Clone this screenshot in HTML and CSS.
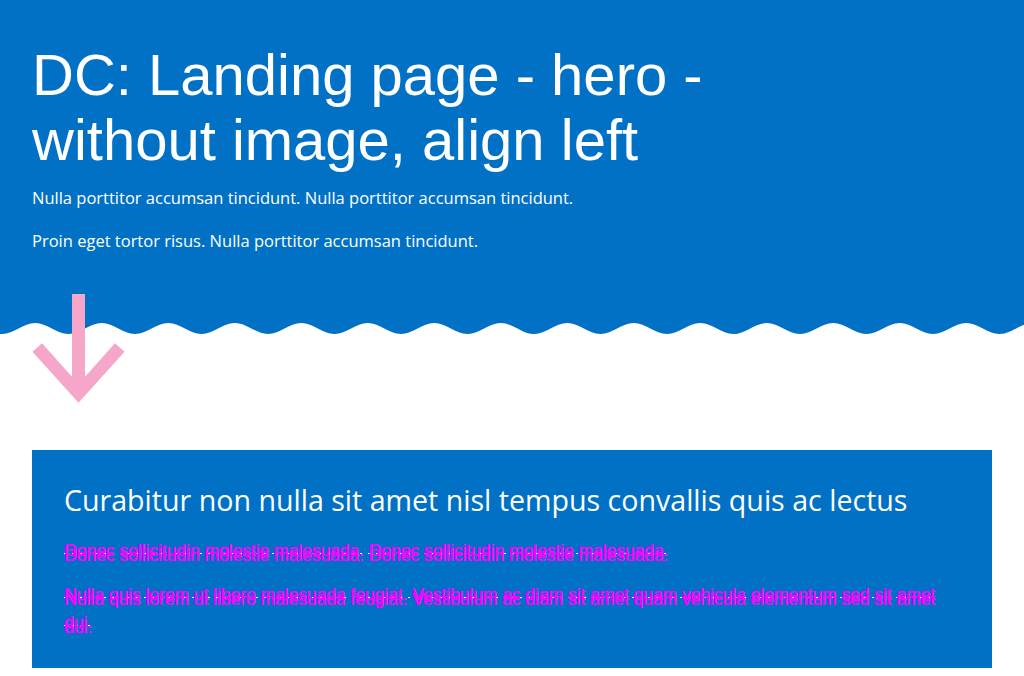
FILE: index.html
```html
<!DOCTYPE html>
<html lang="en">
<head>
<meta charset="utf-8">
<title>DC: Landing page - hero - without image, align left</title>
<link rel="stylesheet" href="styles.css">
</head>
<body>
<div class="page">
  <header class="hero">
    <h1 class="hero-title">DC: Landing page - hero - without image, align left</h1>
    <p class="hero-text">Nulla porttitor accumsan tincidunt. Nulla porttitor accumsan tincidunt.</p>
    <p class="hero-text">Proin eget tortor risus. Nulla porttitor accumsan tincidunt.</p>
  </header>
  <svg class="wave" viewBox="0 0 1024 12" preserveAspectRatio="none" aria-hidden="true">
    <path fill="#0071c5" d="M-64.5,0 V11 c12.1,0 21.15,-11 33.25,-11 s21.15,11 33.25,11 c12.1,0 21.15,-11 33.25,-11 s21.15,11 33.25,11 c12.1,0 21.15,-11 33.25,-11 s21.15,11 33.25,11 c12.1,0 21.15,-11 33.25,-11 s21.15,11 33.25,11 c12.1,0 21.15,-11 33.25,-11 s21.15,11 33.25,11 c12.1,0 21.15,-11 33.25,-11 s21.15,11 33.25,11 c12.1,0 21.15,-11 33.25,-11 s21.15,11 33.25,11 c12.1,0 21.15,-11 33.25,-11 s21.15,11 33.25,11 c12.1,0 21.15,-11 33.25,-11 s21.15,11 33.25,11 c12.1,0 21.15,-11 33.25,-11 s21.15,11 33.25,11 c12.1,0 21.15,-11 33.25,-11 s21.15,11 33.25,11 c12.1,0 21.15,-11 33.25,-11 s21.15,11 33.25,11 c12.1,0 21.15,-11 33.25,-11 s21.15,11 33.25,11 c12.1,0 21.15,-11 33.25,-11 s21.15,11 33.25,11 c12.1,0 21.15,-11 33.25,-11 s21.15,11 33.25,11 c12.1,0 21.15,-11 33.25,-11 s21.15,11 33.25,11 c12.1,0 21.15,-11 33.25,-11 s21.15,11 33.25,11 V0 Z"/>
  </svg>
  <svg class="scroll-arrow" width="93" height="109" viewBox="0 0 93 109" aria-hidden="true">
    <polygon fill="#f5a6c9" points="40,0 53,0 53,82.8 83,49.3 92.5,57.7 46.5,108.7 0.5,57.7 10,49.3 40,82.8"/>
  </svg>
  <main class="content">
    <section class="card">
      <h2 class="card-title">Curabitur non nulla sit amet nisl tempus convallis quis ac lectus</h2>
      <p class="card-text"><span class="card-text-run">Donec sollicitudin molestie malesuada. Donec sollicitudin molestie malesuada.</span></p>
      <p class="card-text"><span class="card-text-run">Nulla quis lorem ut libero malesuada feugiat. Vestibulum ac diam sit amet quam vehicula elementum sed sit amet dui.</span></p>
    </section>
  </main>
</div>
</body>
</html>
```
FILE: styles.css
```css
html, body {
  margin: 0;
  padding: 0;
  background: #ffffff;
}

.page {
  position: relative;
  width: 1024px;
}

.hero {
  background: #0071c5;
  color: #ffffff;
  padding: 42px 32px 70px;
}

.hero-title {
  margin: 0 0 14px;
  max-width: 720px;
  font-family: "Liberation Sans", Arial, sans-serif;
  font-weight: 400;
  font-size: 58px;
  line-height: 65px;
}

.hero-text {
  margin: 0;
  font-family: "Open Sans", "Liberation Sans", sans-serif;
  font-size: 16.5px;
  line-height: 24px;
}

.hero-text + .hero-text {
  margin-top: 19px;
}

.wave {
  display: block;
  width: 1024px;
  height: 12px;
}

.scroll-arrow {
  position: absolute;
  left: 32px;
  top: 294px;
}

.content {
  padding: 115px 32px 8px;
}

.card {
  background: #0071c5;
  padding: 30px 32px 32px;
}

.card-title {
  margin: 0 0 17px;
  color: #ffffff;
  font-family: "Open Sans", "Liberation Sans", sans-serif;
  font-weight: 400;
  font-size: 28.6px;
  line-height: 39px;
}

.card-text {
  margin: 0;
  color: #ff00ff;
  font-family: "Liberation Sans", Arial, sans-serif;
  font-size: 17.4px;
  line-height: 28px;
}

.card-text + .card-text {
  margin-top: 16px;
}

.card-text-run {
  background-image: repeating-linear-gradient(90deg, #ffffff 0 2px, transparent 2px 8px);
  background-size: 100% 1px;
  background-position: 0 13px;
  background-repeat: no-repeat;
  -webkit-box-decoration-break: clone;
  box-decoration-break: clone;
  text-shadow: 0.5px 0 0 #ff00ff, 0 5px 0 #ff00ff, 0.5px 5px 0 #ff00ff;
}
```
